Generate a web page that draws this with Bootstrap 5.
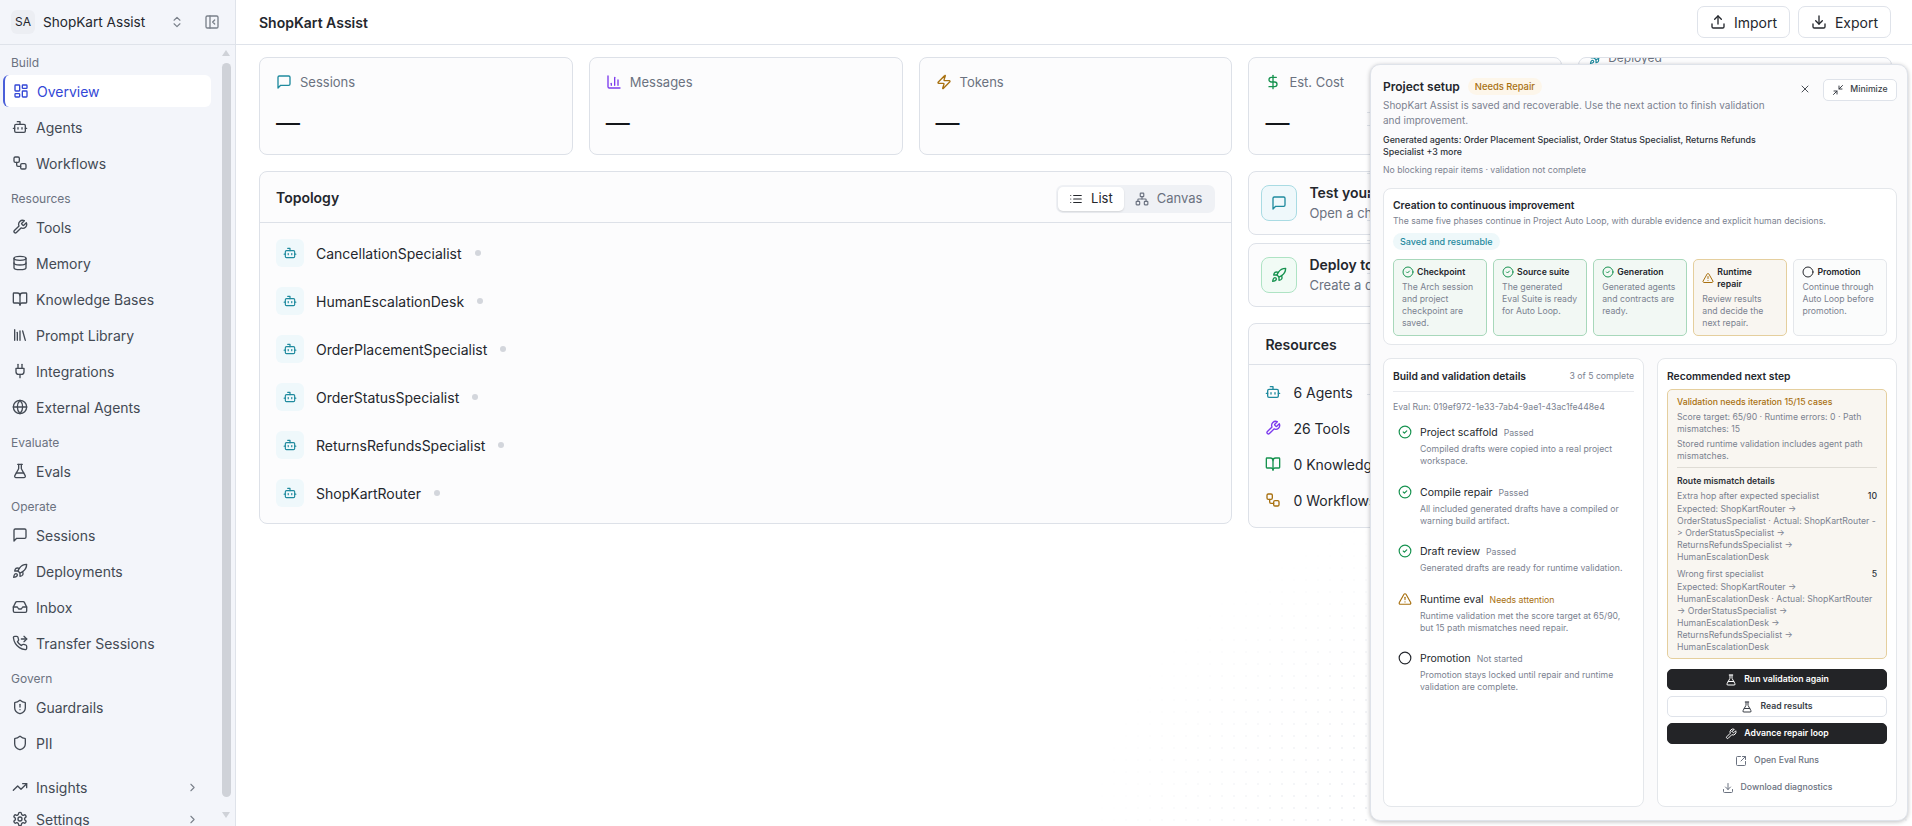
<!DOCTYPE html>
<html lang="en">
<head>
  <meta charset="UTF-8" />
  <meta name="viewport" content="width=device-width, initial-scale=1" />
  <title>ShopKart Assist</title>
  <link href="https://cdn.jsdelivr.net/npm/bootstrap@5.3.3/dist/css/bootstrap.min.css" rel="stylesheet" />
  <style>
    html, body { height: 100%; overflow: hidden; }
    body { font-family: Inter, "Noto Sans", sans-serif; font-size: 14px; color: #24272d; background: #fff; }
    .ico { width: 16px; height: 16px; flex: none; fill: none; stroke: currentColor; stroke-width: 2; stroke-linecap: round; stroke-linejoin: round; }
    .ico-sm { width: 14px; height: 14px; }
    .ico-xs { width: 12px; height: 12px; }
    .teal { color: #1f8a9e; }
    .purple { color: #7c3aed; }
    .amber { color: #a8700f; }
    .green { color: #16924f; }

    /* sidebar */
    .sidebar { width: 236px; flex: none; background: #f3f5fa; border-right: 1px solid #dfe3ea; height: 100vh; overflow: hidden; }
    .side-head { height: 45px; border-bottom: 1px solid #dfe3ea; padding: 0 15px 0 11px; color: #24272d; flex: none; }
    .avatar { width: 24px; height: 24px; background: #eceef3; border-radius: 6px; font-size: 12px; }
    .side-head .name { font-size: 13.6px; margin-left: 8px; }
    .side-head .ico { color: #7a808a; }
    .btn-collapse { margin-left: 20px; }
    .side-scroll { flex: 1; min-height: 0; overflow: hidden; }
    .side-nav { width: 211px; padding: 10px 0 0 3px; flex: none; }
    .side-label { font-size: 12px; line-height: 16px; color: #6b7280; padding-left: 8px; margin: 12px 0 4px; }
    .side-label:first-child { margin-top: 0; }
    .side-item { height: 32px; padding: 0 12px 0 9px; gap: 8px; color: #434a54; font-size: 14px; border-radius: 6px; text-decoration: none; flex: none; }
    .side-item.active { background: #fff; color: #3347d6; border-left: 2px solid #4a5fd9; padding-left: 8px; }
    .side-item .chev { margin-left: auto; color: #7a808a; width: 13px; height: 13px; }
    .side-rail { width: 9px; margin-left: 11px; padding-top: 5px; }
    .side-rail .up, .side-rail .down { width: 0; height: 0; border-left: 4.5px solid transparent; border-right: 4.5px solid transparent; }
    .side-rail .up { border-bottom: 6px solid #cfd2d8; margin-bottom: 7px; }
    .side-rail .down { border-top: 6px solid #cfd2d8; margin-top: 15px; }
    .side-rail .thumb { background: #cfd2d8; border-radius: 5px; height: 734px; }

    /* main */
    .main { min-width: 0; height: 100vh; position: relative; }
    .main::before { content: ""; position: absolute; left: 860px; right: 0; top: 490px; bottom: 0; background-image: radial-gradient(#eceef2 1px, transparent 1.2px); background-size: 12px 12px; -webkit-mask-image: radial-gradient(ellipse at 60% 100%, #000 20%, transparent 72%); mask-image: radial-gradient(ellipse at 60% 100%, #000 20%, transparent 72%); }
    .top-bar { height: 45px; border-bottom: 1px solid #dfe3ea; padding: 0 21px 0 23px; flex: none; }
    .top-bar .title { font-size: 14px; font-weight: 600; }
    .btn-top { height: 32px; width: 93px; padding: 0; font-size: 14px; color: #24272d; background: #fff; border: 1px solid #dfe3ea; border-radius: 7px; display: flex; align-items: center; justify-content: center; gap: 8px; }
    .content { padding: 12px 20px 0 23px; position: relative; }
    .grid-five { display: grid; grid-template-columns: repeat(5, 1fr); gap: 16px; }
    .span-3 { grid-column: span 3; }
    .span-2 { grid-column: span 2; }
    .card { --bs-card-border-color: #dde1e8; --bs-card-bg: #fcfcfd; --bs-card-border-radius: 8px; --bs-card-inner-border-radius: 7px; --bs-card-cap-bg: transparent; }
    .stat { height: 98px; padding: 15px 16px; }
    .stat .lbl { font-size: 13px; line-height: 18px; color: #6b7280; gap: 8px; }
    .stat .val { font-size: 24px; line-height: 28px; margin-top: 18px; color: #14161a; }
    .stat-cut { padding: 0 10px; overflow: hidden; }
    .stat-cut .lbl { margin-top: -9px; font-size: 12px; gap: 5px; }
    .stat-cut .lbl .ico { width: 14px; height: 14px; }
    .card-header.topo-head { height: 51px; padding: 3px 16px 0; border-color: #dde1e8; }
    .card-title-sm { font-size: 14px; font-weight: 600; margin: 0; }
    .seg { background: #eff1f5; border-radius: 7px; padding: 2px; height: 28px; }
    .seg .btn { height: 24px; font-size: 13px; padding: 0 11px; gap: 8px; display: flex; align-items: center; border: 0; border-radius: 5px; color: #6b7280; }
    .seg .btn.active { background: #fff; color: #24272d; box-shadow: 0 1px 2px rgba(0,0,0,.12); }
    .topo-list { padding: 16px; gap: 20px; }
    .topo-row { gap: 12px; height: 28px; }
    .bot-box { width: 28px; height: 28px; border-radius: 6px; background: #eff8fb; color: #1f8a9e; }
    .dot { width: 6px; height: 6px; border-radius: 50%; background: #d3d6dc; margin-left: 1px; }
    .action { height: 64px; padding: 0 12px; gap: 12px; flex-direction: row; align-items: center; white-space: nowrap; overflow: hidden; }
    .action + .action { margin-top: 8px; }
    .action-ico { width: 36px; height: 36px; border-radius: 8px; border: 1px solid; flex: none; }
    .action-ico.t { background: #eff8fb; border-color: #a9dbe3; color: #1f8a9e; }
    .action-ico.g { background: #f1fbf5; border-color: #aee3c4; color: #16924f; }
    .action b { display: block; font-size: 14px; line-height: 18px; font-weight: 600; }
    .action small { display: block; font-size: 13px; line-height: 18px; color: #6b7280; margin-top: 2px; }
    .res { margin-top: 16px; white-space: nowrap; height: 205px; }
    .res-head { height: 43px; padding: 3px 16px 0; border-color: #dde1e8; }
    .res-body { padding: 9px 16px; }
    .res-row { height: 36px; gap: 12px; font-size: 14px; }

    /* slivers of the layer below that show at the panel's left edge */
    .sliver { position: absolute; left: 1367px; top: 64px; width: 3px; height: 340px; z-index: 4; background:
      linear-gradient(#dfe3ea,#dfe3ea) 0 48px/3px 1px no-repeat,
      linear-gradient(#dfe3ea,#dfe3ea) 0 61px/3px 1px no-repeat,
      linear-gradient(#dfe3ea,#dfe3ea) 0 109px/3px 1px no-repeat,
      linear-gradient(#dfe3ea,#dfe3ea) 0 129px/3px 1px no-repeat,
      linear-gradient(#dfe3ea,#dfe3ea) 0 156px/3px 1px no-repeat,
      linear-gradient(#dfe3ea,#dfe3ea) 0 176px/3px 1px no-repeat,
      linear-gradient(#dfe3ea,#dfe3ea) 0 209px/3px 1px no-repeat,
      linear-gradient(#dfe3ea,#dfe3ea) 0 330px/3px 1px no-repeat; }

    /* project panel */
    .panel { position: absolute; z-index: 5; top: 64px; right: 4px; width: 538px; height: 757px; background: #fbfbfc; border: 1px solid #dfe3ea; border-radius: 10px; box-shadow: 0 1px 4px rgba(20,24,32,.28); padding: 13px 10px 13px 12px; }
    .panel-title { font-size: 12px; line-height: 17px; font-weight: 600; }
    .pill { font-size: 9.4px; line-height: 17px; padding: 0 7px; border-radius: 9px; font-weight: 500; display: block; width: fit-content; }
    .pill-amber { background: #fdf6ea; color: #a8700f; }
    .pill-teal { background: #eef8fa; color: #1f8a9e; font-size: 9px; margin-top: 6px; }
    .panel-desc { font-size: 10px; line-height: 15px; color: #7b8290; width: 390px; margin: 3px 0 6px; }
    .panel-agents { font-size: 8.9px; line-height: 12px; font-weight: 500; color: #2c3138; width: 390px; }
    .muted-xs { font-size: 8.7px; line-height: 12px; color: #7b8290; }
    .panel-note { margin-top: 6px; }
    .btn-min { height: 22px; width: 74px; font-size: 8.7px; font-weight: 500; padding: 0; gap: 6px; background: #fff; border: 1px solid #dfe3ea; border-radius: 5px; color: #3a3f47; display: flex; align-items: center; justify-content: center; margin-top: 1px; }
    .btn-x { color: #4a4f57; margin-right: 12px; margin-top: 5px; line-height: 0; }
    .inner { background: #fff; border: 1px solid #e4e7eb; border-radius: 8px; }
    .inner h6 { font-size: 10.3px; line-height: 16px; font-weight: 600; margin: 0; }
    .loop { margin-top: 12px; padding: 9px 9px 0; height: 157px; flex: none; }
    .inner.loop h6 { line-height: 14px; }
    .loop .muted-xs { margin-top: 3px; }
    .phases { display: grid; grid-template-columns: repeat(5, 1fr); gap: 6.5px; margin-top: 9px; }
    .phase { height: 77px; border: 1px solid; border-radius: 5px; padding: 6px 8px 0; }
    .phase.ok { background: #f2f8f4; border-color: #a8d8bb; }
    .phase.warn { background: #f9f6f1; border-color: #e5cf9e; }
    .phase.todo { background: #fbfcfc; border-color: #e4e7eb; }
    .phase .ph { font-size: 8.7px; line-height: 12px; font-weight: 600; gap: 3px; margin-bottom: 3px; }
    .phase p { font-size: 8.7px; line-height: 12px; color: #7b8290; margin: 0; }
    .lower { display: grid; grid-template-columns: 261px 240px; gap: 13px; margin-top: 13px; }
    .lower .inner { height: 449px; padding: 9px; }
    .rule { border-bottom: 1px solid #e9ebef; height: 8px; }
    .run-id { margin-top: 9px; }
    .steps { padding-left: 5px; margin-top: 12px; gap: 17.5px; }
    .step { gap: 8px; }
    .step .t { font-size: 10.5px; line-height: 15px; font-weight: 400; }
    .step .s { font-size: 8.7px; color: #7b8290; margin-left: 3px; }
    .step .s.a { color: #a8700f; }
    .step p { font-size: 8.7px; line-height: 12px; color: #7b8290; margin: 2px 0 0; }
    .next { background: #f9f6f1; border: 1px solid #e5cf9e; border-radius: 5px; padding: 6px 9px; height: 270px; margin-top: 5px; font-size: 8.7px; line-height: 12px; color: #7b8290; }
    .next .head { color: #a8700f; font-weight: 500; }
    .next p { margin: 3px 0 0; }
    .next hr { margin: 5px 0 7px; border-color: #dfdcd5; opacity: 1; }
    .next .sub { color: #2c3138; font-weight: 600; }
    .next .cnt { color: #2c3138; font-weight: 500; }
    .next .case { margin-top: 3px; }
    .next .case + .path { margin-top: 1px; }
    .next .path + .case { margin-top: 5px; }
    .act { height: 21px; font-size: 8.7px; font-weight: 600; padding: 0; gap: 7px; border-radius: 5px; display: flex; align-items: center; justify-content: center; margin-top: 6px; width: 100%; }
    .act.dark { background: #232427; border: 1px solid #232427; color: #fff; }
    .act.plain { background: #fff; border: 1px solid #dfe3ea; color: #3a3f47; }
    .act.ghost { background: transparent; border: 0; color: #6b7280; font-weight: 500; }
    .act.first { margin-top: 10px; }
  </style>
</head>
<body>
  <svg width="0" height="0" class="position-absolute">
    <symbol id="i-dash" viewBox="0 0 24 24"><rect x="3" y="3" width="7" height="9" rx="1"/><rect x="14" y="3" width="7" height="5" rx="1"/><rect x="14" y="12" width="7" height="9" rx="1"/><rect x="3" y="16" width="7" height="5" rx="1"/></symbol>
    <symbol id="i-bot" viewBox="0 0 24 24"><path d="M12 8V4H8"/><rect x="4" y="8" width="16" height="12" rx="2"/><path d="M2 14h2"/><path d="M20 14h2"/><path d="M15 13v2"/><path d="M9 13v2"/></symbol>
    <symbol id="i-flow" viewBox="0 0 24 24"><rect x="3" y="3" width="8" height="8" rx="2"/><path d="M7 11v4a2 2 0 0 0 2 2h4"/><rect x="13" y="13" width="8" height="8" rx="2"/></symbol>
    <symbol id="i-wrench" viewBox="0 0 24 24"><path d="M14.7 6.3a1 1 0 0 0 0 1.4l1.6 1.6a1 1 0 0 0 1.4 0l3.77-3.77a6 6 0 0 1-7.94 7.94l-6.91 6.91a2.12 2.12 0 0 1-3-3l6.91-6.91a6 6 0 0 1 7.94-7.94l-3.76 3.76z"/></symbol>
    <symbol id="i-db" viewBox="0 0 24 24"><ellipse cx="12" cy="5" rx="9" ry="3"/><path d="M3 5V19A9 3 0 0 0 21 19V5"/><path d="M3 12A9 3 0 0 0 21 12"/></symbol>
    <symbol id="i-book" viewBox="0 0 24 24"><path d="M12 7v14"/><path d="M3 18a1 1 0 0 1-1-1V4a1 1 0 0 1 1-1h5a4 4 0 0 1 4 4 4 4 0 0 1 4-4h5a1 1 0 0 1 1 1v13a1 1 0 0 1-1 1h-6a3 3 0 0 0-3 3 3 3 0 0 0-3-3z"/></symbol>
    <symbol id="i-lib" viewBox="0 0 24 24"><path d="m16 6 4 14"/><path d="M12 6v14"/><path d="M8 8v12"/><path d="M4 4v16"/></symbol>
    <symbol id="i-plug" viewBox="0 0 24 24"><path d="M12 22v-5"/><path d="M9 8V2"/><path d="M15 8V2"/><path d="M18 8v5a4 4 0 0 1-4 4h-4a4 4 0 0 1-4-4V8Z"/></symbol>
    <symbol id="i-globe" viewBox="0 0 24 24"><circle cx="12" cy="12" r="10"/><path d="M12 2a14.5 14.5 0 0 0 0 20 14.5 14.5 0 0 0 0-20"/><path d="M2 12h20"/></symbol>
    <symbol id="i-flask" viewBox="0 0 24 24"><path d="M14 2v6a2 2 0 0 0 .245.96l5.51 10.08A2 2 0 0 1 18 22H6a2 2 0 0 1-1.755-2.96l5.51-10.08A2 2 0 0 0 10 8V2"/><path d="M6.453 15h11.094"/><path d="M8.5 2h7"/></symbol>
    <symbol id="i-msg" viewBox="0 0 24 24"><path d="M21 15a2 2 0 0 1-2 2H7l-4 4V5a2 2 0 0 1 2-2h14a2 2 0 0 1 2 2z"/></symbol>
    <symbol id="i-rocket" viewBox="0 0 24 24"><path d="M4.5 16.5c-1.5 1.26-2 5-2 5s3.74-.5 5-2c.71-.84.7-2.13-.09-2.91a2.18 2.18 0 0 0-2.91-.09z"/><path d="m12 15-3-3a22 22 0 0 1 2-3.95A12.88 12.88 0 0 1 22 2c0 2.72-.78 7.5-6 11a22.35 22.35 0 0 1-4 2z"/><path d="M9 12H4s.55-3.03 2-4c1.62-1.08 5 0 5 0"/><path d="M12 15v5s3.03-.55 4-2c1.08-1.62 0-5 0-5"/></symbol>
    <symbol id="i-inbox" viewBox="0 0 24 24"><polyline points="22 12 16 12 14 15 10 15 8 12 2 12"/><path d="M5.45 5.11 2 12v6a2 2 0 0 0 2 2h16a2 2 0 0 0 2-2v-6l-3.45-6.89A2 2 0 0 0 16.76 4H7.24a2 2 0 0 0-1.79 1.11z"/></symbol>
    <symbol id="i-phone" viewBox="0 0 24 24"><polyline points="18 2 22 6 18 10"/><line x1="14" y1="6" x2="22" y2="6"/><path d="M22 16.92v3a2 2 0 0 1-2.18 2 19.79 19.79 0 0 1-8.63-3.07 19.5 19.5 0 0 1-6-6 19.79 19.79 0 0 1-3.07-8.67A2 2 0 0 1 4.11 2h3a2 2 0 0 1 2 1.72 12.84 12.84 0 0 0 .7 2.81 2 2 0 0 1-.45 2.11L8.09 9.91a16 16 0 0 0 6 6l1.27-1.27a2 2 0 0 1 2.11-.45 12.84 12.84 0 0 0 2.81.7A2 2 0 0 1 22 16.92z"/></symbol>
    <symbol id="i-shield-a" viewBox="0 0 24 24"><path d="M20 13c0 5-3.5 7.5-7.66 8.95a1 1 0 0 1-.67-.01C7.5 20.5 4 18 4 13V6a1 1 0 0 1 1-1c2 0 4.5-1.2 6.24-2.72a1.17 1.17 0 0 1 1.52 0C14.51 3.81 17 5 19 5a1 1 0 0 1 1 1z"/><path d="M12 8v4"/><path d="M12 16h.01"/></symbol>
    <symbol id="i-shield" viewBox="0 0 24 24"><path d="M20 13c0 5-3.5 7.5-7.66 8.95a1 1 0 0 1-.67-.01C7.5 20.5 4 18 4 13V6a1 1 0 0 1 1-1c2 0 4.5-1.2 6.24-2.72a1.17 1.17 0 0 1 1.52 0C14.51 3.81 17 5 19 5a1 1 0 0 1 1 1z"/></symbol>
    <symbol id="i-trend" viewBox="0 0 24 24"><polyline points="22 7 13.5 15.5 8.5 10.5 2 17"/><polyline points="16 7 22 7 22 13"/></symbol>
    <symbol id="i-gear" viewBox="0 0 24 24"><path d="M12.22 2h-.44a2 2 0 0 0-2 2v.18a2 2 0 0 1-1 1.73l-.43.25a2 2 0 0 1-2 0l-.15-.08a2 2 0 0 0-2.73.73l-.22.38a2 2 0 0 0 .73 2.73l.15.1a2 2 0 0 1 1 1.72v.51a2 2 0 0 1-1 1.74l-.15.09a2 2 0 0 0-.73 2.73l.22.38a2 2 0 0 0 2.73.73l.15-.08a2 2 0 0 1 2 0l.43.25a2 2 0 0 1 1 1.73V20a2 2 0 0 0 2 2h.44a2 2 0 0 0 2-2v-.18a2 2 0 0 1 1-1.73l.43-.25a2 2 0 0 1 2 0l.15.08a2 2 0 0 0 2.73-.73l.22-.39a2 2 0 0 0-.73-2.73l-.15-.08a2 2 0 0 1-1-1.74v-.5a2 2 0 0 1 1-1.74l.15-.09a2 2 0 0 0 .73-2.73l-.22-.38a2 2 0 0 0-2.73-.73l-.15.08a2 2 0 0 1-2 0l-.43-.25a2 2 0 0 1-1-1.73V4a2 2 0 0 0-2-2z"/><circle cx="12" cy="12" r="3"/></symbol>
    <symbol id="i-chev" viewBox="0 0 24 24"><path d="m9 18 6-6-6-6"/></symbol>
    <symbol id="i-updown" viewBox="0 0 24 24"><path d="m7 15 5 5 5-5"/><path d="m7 9 5-5 5 5"/></symbol>
    <symbol id="i-panel" viewBox="0 0 24 24"><rect x="3" y="3" width="18" height="18" rx="2"/><path d="M9 3v18"/><path d="m16 15-3-3 3-3"/></symbol>
    <symbol id="i-up" viewBox="0 0 24 24"><path d="M21 15v4a2 2 0 0 1-2 2H5a2 2 0 0 1-2-2v-4"/><polyline points="17 8 12 3 7 8"/><line x1="12" y1="3" x2="12" y2="15"/></symbol>
    <symbol id="i-down" viewBox="0 0 24 24"><path d="M21 15v4a2 2 0 0 1-2 2H5a2 2 0 0 1-2-2v-4"/><polyline points="7 10 12 15 17 10"/><line x1="12" y1="15" x2="12" y2="3"/></symbol>
    <symbol id="i-chart" viewBox="0 0 24 24"><path d="M3 3v16a2 2 0 0 0 2 2h16"/><path d="M18 17V9"/><path d="M13 17V5"/><path d="M8 17v-3"/></symbol>
    <symbol id="i-zap" viewBox="0 0 24 24"><path d="M4 14a1 1 0 0 1-.78-1.63l9.9-10.2a.5.5 0 0 1 .86.46l-1.92 6.02A1 1 0 0 0 13 10h7a1 1 0 0 1 .78 1.63l-9.9 10.2a.5.5 0 0 1-.86-.46l1.92-6.02A1 1 0 0 0 11 14z"/></symbol>
    <symbol id="i-dollar" viewBox="0 0 24 24"><line x1="12" y1="2" x2="12" y2="22"/><path d="M17 5H9.5a3.5 3.5 0 0 0 0 7h5a3.5 3.5 0 0 1 0 7H6"/></symbol>
    <symbol id="i-list" viewBox="0 0 24 24"><path d="M3 12h.01"/><path d="M3 18h.01"/><path d="M3 6h.01"/><path d="M8 12h13"/><path d="M8 18h13"/><path d="M8 6h13"/></symbol>
    <symbol id="i-net" viewBox="0 0 24 24"><rect x="16" y="16" width="6" height="6" rx="1"/><rect x="2" y="16" width="6" height="6" rx="1"/><rect x="9" y="2" width="6" height="6" rx="1"/><path d="M5 16v-3a1 1 0 0 1 1-1h12a1 1 0 0 1 1 1v3"/><path d="M12 12V8"/></symbol>
    <symbol id="i-x" viewBox="0 0 24 24"><path d="M18 6 6 18"/><path d="m6 6 12 12"/></symbol>
    <symbol id="i-min" viewBox="0 0 24 24"><path d="m14 10 7-7"/><path d="M20 10h-6V4"/><path d="m3 21 7-7"/><path d="M4 14h6v6"/></symbol>
    <symbol id="i-check" viewBox="0 0 24 24"><circle cx="12" cy="12" r="10"/><path d="m9 12 2 2 4-4"/></symbol>
    <symbol id="i-warn" viewBox="0 0 24 24"><path d="m21.73 18-8-14a2 2 0 0 0-3.48 0l-8 14A2 2 0 0 0 4 21h16a2 2 0 0 0 1.73-3"/><path d="M12 9v4"/><path d="M12 17h.01"/></symbol>
    <symbol id="i-circle" viewBox="0 0 24 24"><circle cx="12" cy="12" r="10"/></symbol>
    <symbol id="i-ext" viewBox="0 0 24 24"><path d="M21 13v6a2 2 0 0 1-2 2H5a2 2 0 0 1-2-2V5a2 2 0 0 1 2-2h6"/><path d="m21 3-9 9"/><path d="M15 3h6v6"/></symbol>
  </svg>

  <div class="d-flex">
    <aside class="sidebar d-flex flex-column">
      <div class="side-head d-flex align-items-center">
        <span class="avatar d-flex align-items-center justify-content-center">SA</span>
        <span class="name">ShopKart Assist</span>
        <svg class="ico ico-sm ms-auto"><use href="#i-updown"/></svg>
        <svg class="ico btn-collapse"><use href="#i-panel"/></svg>
      </div>
      <div class="side-scroll d-flex">
        <nav class="side-nav d-flex flex-column">
          <div class="side-label">Build</div>
          <div class="d-flex flex-column gap-1">
            <a href="#" class="side-item active d-flex align-items-center"><svg class="ico"><use href="#i-dash"/></svg>Overview</a>
            <a href="#" class="side-item d-flex align-items-center"><svg class="ico"><use href="#i-bot"/></svg>Agents</a>
            <a href="#" class="side-item d-flex align-items-center"><svg class="ico"><use href="#i-flow"/></svg>Workflows</a>
          </div>
          <div class="side-label">Resources</div>
          <div class="d-flex flex-column gap-1">
            <a href="#" class="side-item d-flex align-items-center"><svg class="ico"><use href="#i-wrench"/></svg>Tools</a>
            <a href="#" class="side-item d-flex align-items-center"><svg class="ico"><use href="#i-db"/></svg>Memory</a>
            <a href="#" class="side-item d-flex align-items-center"><svg class="ico"><use href="#i-book"/></svg>Knowledge Bases</a>
            <a href="#" class="side-item d-flex align-items-center"><svg class="ico"><use href="#i-lib"/></svg>Prompt Library</a>
            <a href="#" class="side-item d-flex align-items-center"><svg class="ico"><use href="#i-plug"/></svg>Integrations</a>
            <a href="#" class="side-item d-flex align-items-center"><svg class="ico"><use href="#i-globe"/></svg>External Agents</a>
          </div>
          <div class="side-label">Evaluate</div>
          <div class="d-flex flex-column gap-1">
            <a href="#" class="side-item d-flex align-items-center"><svg class="ico"><use href="#i-flask"/></svg>Evals</a>
          </div>
          <div class="side-label">Operate</div>
          <div class="d-flex flex-column gap-1">
            <a href="#" class="side-item d-flex align-items-center"><svg class="ico"><use href="#i-msg"/></svg>Sessions</a>
            <a href="#" class="side-item d-flex align-items-center"><svg class="ico"><use href="#i-rocket"/></svg>Deployments</a>
            <a href="#" class="side-item d-flex align-items-center"><svg class="ico"><use href="#i-inbox"/></svg>Inbox</a>
            <a href="#" class="side-item d-flex align-items-center"><svg class="ico"><use href="#i-phone"/></svg>Transfer Sessions</a>
          </div>
          <div class="side-label">Govern</div>
          <div class="d-flex flex-column gap-1">
            <a href="#" class="side-item d-flex align-items-center"><svg class="ico"><use href="#i-shield-a"/></svg>Guardrails</a>
            <a href="#" class="side-item d-flex align-items-center"><svg class="ico"><use href="#i-shield"/></svg>PII</a>
          </div>
          <div class="d-flex flex-column mt-2 pt-1">
            <a href="#" class="side-item d-flex align-items-center"><svg class="ico"><use href="#i-trend"/></svg>Insights<svg class="ico chev"><use href="#i-chev"/></svg></a>
            <a href="#" class="side-item d-flex align-items-center"><svg class="ico"><use href="#i-gear"/></svg>Settings<svg class="ico chev"><use href="#i-chev"/></svg></a>
          </div>
        </nav>
        <div class="side-rail">
          <div class="up"></div>
          <div class="thumb"></div>
          <div class="down"></div>
        </div>
      </div>
    </aside>

    <div class="main flex-grow-1 d-flex flex-column">
      <header class="top-bar d-flex align-items-center justify-content-between">
        <span class="title">ShopKart Assist</span>
        <div class="d-flex gap-2">
          <button class="btn btn-top"><svg class="ico"><use href="#i-up"/></svg>Import</button>
          <button class="btn btn-top"><svg class="ico"><use href="#i-down"/></svg>Export</button>
        </div>
      </header>

      <div class="content">
        <div class="grid-five">
          <div class="card stat">
            <div class="lbl d-flex align-items-center"><svg class="ico teal"><use href="#i-msg"/></svg>Sessions</div>
            <div class="val">—</div>
          </div>
          <div class="card stat">
            <div class="lbl d-flex align-items-center"><svg class="ico purple"><use href="#i-chart"/></svg>Messages</div>
            <div class="val">—</div>
          </div>
          <div class="card stat">
            <div class="lbl d-flex align-items-center"><svg class="ico amber"><use href="#i-zap"/></svg>Tokens</div>
            <div class="val">—</div>
          </div>
          <div class="card stat">
            <div class="lbl d-flex align-items-center"><svg class="ico green"><use href="#i-dollar"/></svg>Est. Cost</div>
            <div class="val">—</div>
          </div>
          <div class="card stat stat-cut">
            <div class="lbl d-flex align-items-center"><svg class="ico teal"><use href="#i-rocket"/></svg>Deployed</div>
          </div>
        </div>

        <div class="grid-five mt-3">
          <div class="card span-3 align-self-start">
            <div class="card-header topo-head d-flex align-items-center justify-content-between">
              <h2 class="card-title-sm">Topology</h2>
              <div class="seg d-flex">
                <button class="btn active"><svg class="ico ico-sm"><use href="#i-list"/></svg>List</button>
                <button class="btn"><svg class="ico ico-sm"><use href="#i-net"/></svg>Canvas</button>
              </div>
            </div>
            <div class="topo-list d-flex flex-column">
              <div class="topo-row d-flex align-items-center"><span class="bot-box d-flex align-items-center justify-content-center"><svg class="ico ico-sm"><use href="#i-bot"/></svg></span>CancellationSpecialist<span class="dot"></span></div>
              <div class="topo-row d-flex align-items-center"><span class="bot-box d-flex align-items-center justify-content-center"><svg class="ico ico-sm"><use href="#i-bot"/></svg></span>HumanEscalationDesk<span class="dot"></span></div>
              <div class="topo-row d-flex align-items-center"><span class="bot-box d-flex align-items-center justify-content-center"><svg class="ico ico-sm"><use href="#i-bot"/></svg></span>OrderPlacementSpecialist<span class="dot"></span></div>
              <div class="topo-row d-flex align-items-center"><span class="bot-box d-flex align-items-center justify-content-center"><svg class="ico ico-sm"><use href="#i-bot"/></svg></span>OrderStatusSpecialist<span class="dot"></span></div>
              <div class="topo-row d-flex align-items-center"><span class="bot-box d-flex align-items-center justify-content-center"><svg class="ico ico-sm"><use href="#i-bot"/></svg></span>ReturnsRefundsSpecialist<span class="dot"></span></div>
              <div class="topo-row d-flex align-items-center"><span class="bot-box d-flex align-items-center justify-content-center"><svg class="ico ico-sm"><use href="#i-bot"/></svg></span>ShopKartRouter<span class="dot"></span></div>
            </div>
          </div>

          <div class="span-2">
            <div class="card action">
              <span class="action-ico t d-flex align-items-center justify-content-center"><svg class="ico"><use href="#i-msg"/></svg></span>
              <div><b>Test your agent</b><small>Open a chat with your router</small></div>
            </div>
            <div class="card action">
              <span class="action-ico g d-flex align-items-center justify-content-center"><svg class="ico"><use href="#i-rocket"/></svg></span>
              <div><b>Deploy to production</b><small>Create a deployment</small></div>
            </div>
            <div class="card res">
              <div class="card-header res-head d-flex align-items-center"><h2 class="card-title-sm">Resources</h2></div>
              <div class="res-body d-flex flex-column">
                <div class="res-row d-flex align-items-center"><svg class="ico teal"><use href="#i-bot"/></svg>6 Agents</div>
                <div class="res-row d-flex align-items-center"><svg class="ico purple"><use href="#i-wrench"/></svg>26 Tools</div>
                <div class="res-row d-flex align-items-center"><svg class="ico green"><use href="#i-book"/></svg>0 Knowledge Bases</div>
                <div class="res-row d-flex align-items-center"><svg class="ico amber"><use href="#i-flow"/></svg>0 Workflows</div>
              </div>
            </div>
          </div>
        </div>
      </div>
    </div>
  </div>

  <div class="sliver"></div>

  <section class="panel d-flex flex-column">
    <div class="d-flex align-items-start justify-content-between">
      <div>
        <div class="d-flex align-items-center gap-2">
          <span class="panel-title">Project setup</span>
          <span class="pill pill-amber">Needs Repair</span>
        </div>
        <p class="panel-desc">ShopKart Assist is saved and recoverable. Use the next action to finish validation and improvement.</p>
        <div class="panel-agents">Generated agents: Order Placement Specialist, Order Status Specialist, Returns Refunds Specialist +3 more</div>
        <div class="muted-xs panel-note">No blocking repair items · validation not complete</div>
      </div>
      <div class="d-flex align-items-start">
        <span class="btn-x"><svg class="ico ico-xs"><use href="#i-x"/></svg></span>
        <button class="btn btn-min"><svg class="ico ico-xs"><use href="#i-min"/></svg>Minimize</button>
      </div>
    </div>

    <div class="inner loop">
      <h6>Creation to continuous improvement</h6>
      <div class="muted-xs">The same five phases continue in Project Auto Loop, with durable evidence and explicit human decisions.</div>
      <span class="pill pill-teal">Saved and resumable</span>
      <div class="phases">
        <div class="phase ok">
          <div class="ph d-flex align-items-center"><svg class="ico ico-xs green"><use href="#i-check"/></svg>Checkpoint</div>
          <p>The Arch session and project checkpoint are saved.</p>
        </div>
        <div class="phase ok">
          <div class="ph d-flex align-items-center"><svg class="ico ico-xs green"><use href="#i-check"/></svg>Source suite</div>
          <p>The generated Eval Suite is ready for Auto Loop.</p>
        </div>
        <div class="phase ok">
          <div class="ph d-flex align-items-center"><svg class="ico ico-xs green"><use href="#i-check"/></svg>Generation</div>
          <p>Generated agents and contracts are ready.</p>
        </div>
        <div class="phase warn">
          <div class="ph d-flex align-items-center"><svg class="ico ico-xs amber"><use href="#i-warn"/></svg>Runtime repair</div>
          <p>Review results and decide the next repair.</p>
        </div>
        <div class="phase todo">
          <div class="ph d-flex align-items-center"><svg class="ico ico-xs"><use href="#i-circle"/></svg>Promotion</div>
          <p>Continue through Auto Loop before promotion.</p>
        </div>
      </div>
    </div>

    <div class="lower">
      <div class="inner">
        <div class="d-flex justify-content-between align-items-center"><h6>Build and validation details</h6><span class="muted-xs">3 of 5 complete</span></div>
        <div class="rule"></div>
        <div class="muted-xs run-id">Eval Run: 019ef972-1e33-7ab4-9ae1-43ac1fe448e4</div>
        <div class="steps d-flex flex-column">
          <div class="step d-flex"><svg class="ico ico-sm green"><use href="#i-check"/></svg><div><div class="t">Project scaffold <span class="s">Passed</span></div><p>Compiled drafts were copied into a real project workspace.</p></div></div>
          <div class="step d-flex"><svg class="ico ico-sm green"><use href="#i-check"/></svg><div><div class="t">Compile repair <span class="s">Passed</span></div><p>All included generated drafts have a compiled or warning build artifact.</p></div></div>
          <div class="step d-flex"><svg class="ico ico-sm green"><use href="#i-check"/></svg><div><div class="t">Draft review <span class="s">Passed</span></div><p>Generated drafts are ready for runtime validation.</p></div></div>
          <div class="step d-flex"><svg class="ico ico-sm amber"><use href="#i-warn"/></svg><div><div class="t">Runtime eval <span class="s a">Needs attention</span></div><p>Runtime validation met the score target at 65/90, but 15 path mismatches need repair.</p></div></div>
          <div class="step d-flex"><svg class="ico ico-sm"><use href="#i-circle"/></svg><div><div class="t">Promotion <span class="s">Not started</span></div><p>Promotion stays locked until repair and runtime validation are complete.</p></div></div>
        </div>
      </div>
      <div class="inner">
        <h6>Recommended next step</h6>
        <div class="next">
          <div class="head">Validation needs iteration 15/15 cases</div>
          <p>Score target: 65/90 · Runtime errors: 0 · Path mismatches: 15</p>
          <p>Stored runtime validation includes agent path mismatches.</p>
          <hr />
          <div class="sub">Route mismatch details</div>
          <div class="case d-flex justify-content-between"><span>Extra hop after expected specialist</span><span class="cnt">10</span></div>
          <div class="path">Expected: ShopKartRouter → OrderStatusSpecialist · Actual: ShopKartRouter -&gt; OrderStatusSpecialist → ReturnsRefundsSpecialist → HumanEscalationDesk</div>
          <div class="case d-flex justify-content-between"><span>Wrong first specialist</span><span class="cnt">5</span></div>
          <div class="path">Expected: ShopKartRouter → HumanEscalationDesk · Actual: ShopKartRouter → OrderStatusSpecialist → HumanEscalationDesk → ReturnsRefundsSpecialist → HumanEscalationDesk</div>
        </div>
        <button class="btn act dark first"><svg class="ico ico-xs"><use href="#i-flask"/></svg>Run validation again</button>
        <button class="btn act plain"><svg class="ico ico-xs"><use href="#i-flask"/></svg>Read results</button>
        <button class="btn act dark"><svg class="ico ico-xs"><use href="#i-wrench"/></svg>Advance repair loop</button>
        <button class="btn act ghost"><svg class="ico ico-xs"><use href="#i-ext"/></svg>Open Eval Runs</button>
        <button class="btn act ghost"><svg class="ico ico-xs"><use href="#i-down"/></svg>Download diagnostics</button>
      </div>
    </div>
  </section>

  <script src="https://cdn.jsdelivr.net/npm/bootstrap@5.3.3/dist/js/bootstrap.bundle.min.js"></script>
</body>
</html>
